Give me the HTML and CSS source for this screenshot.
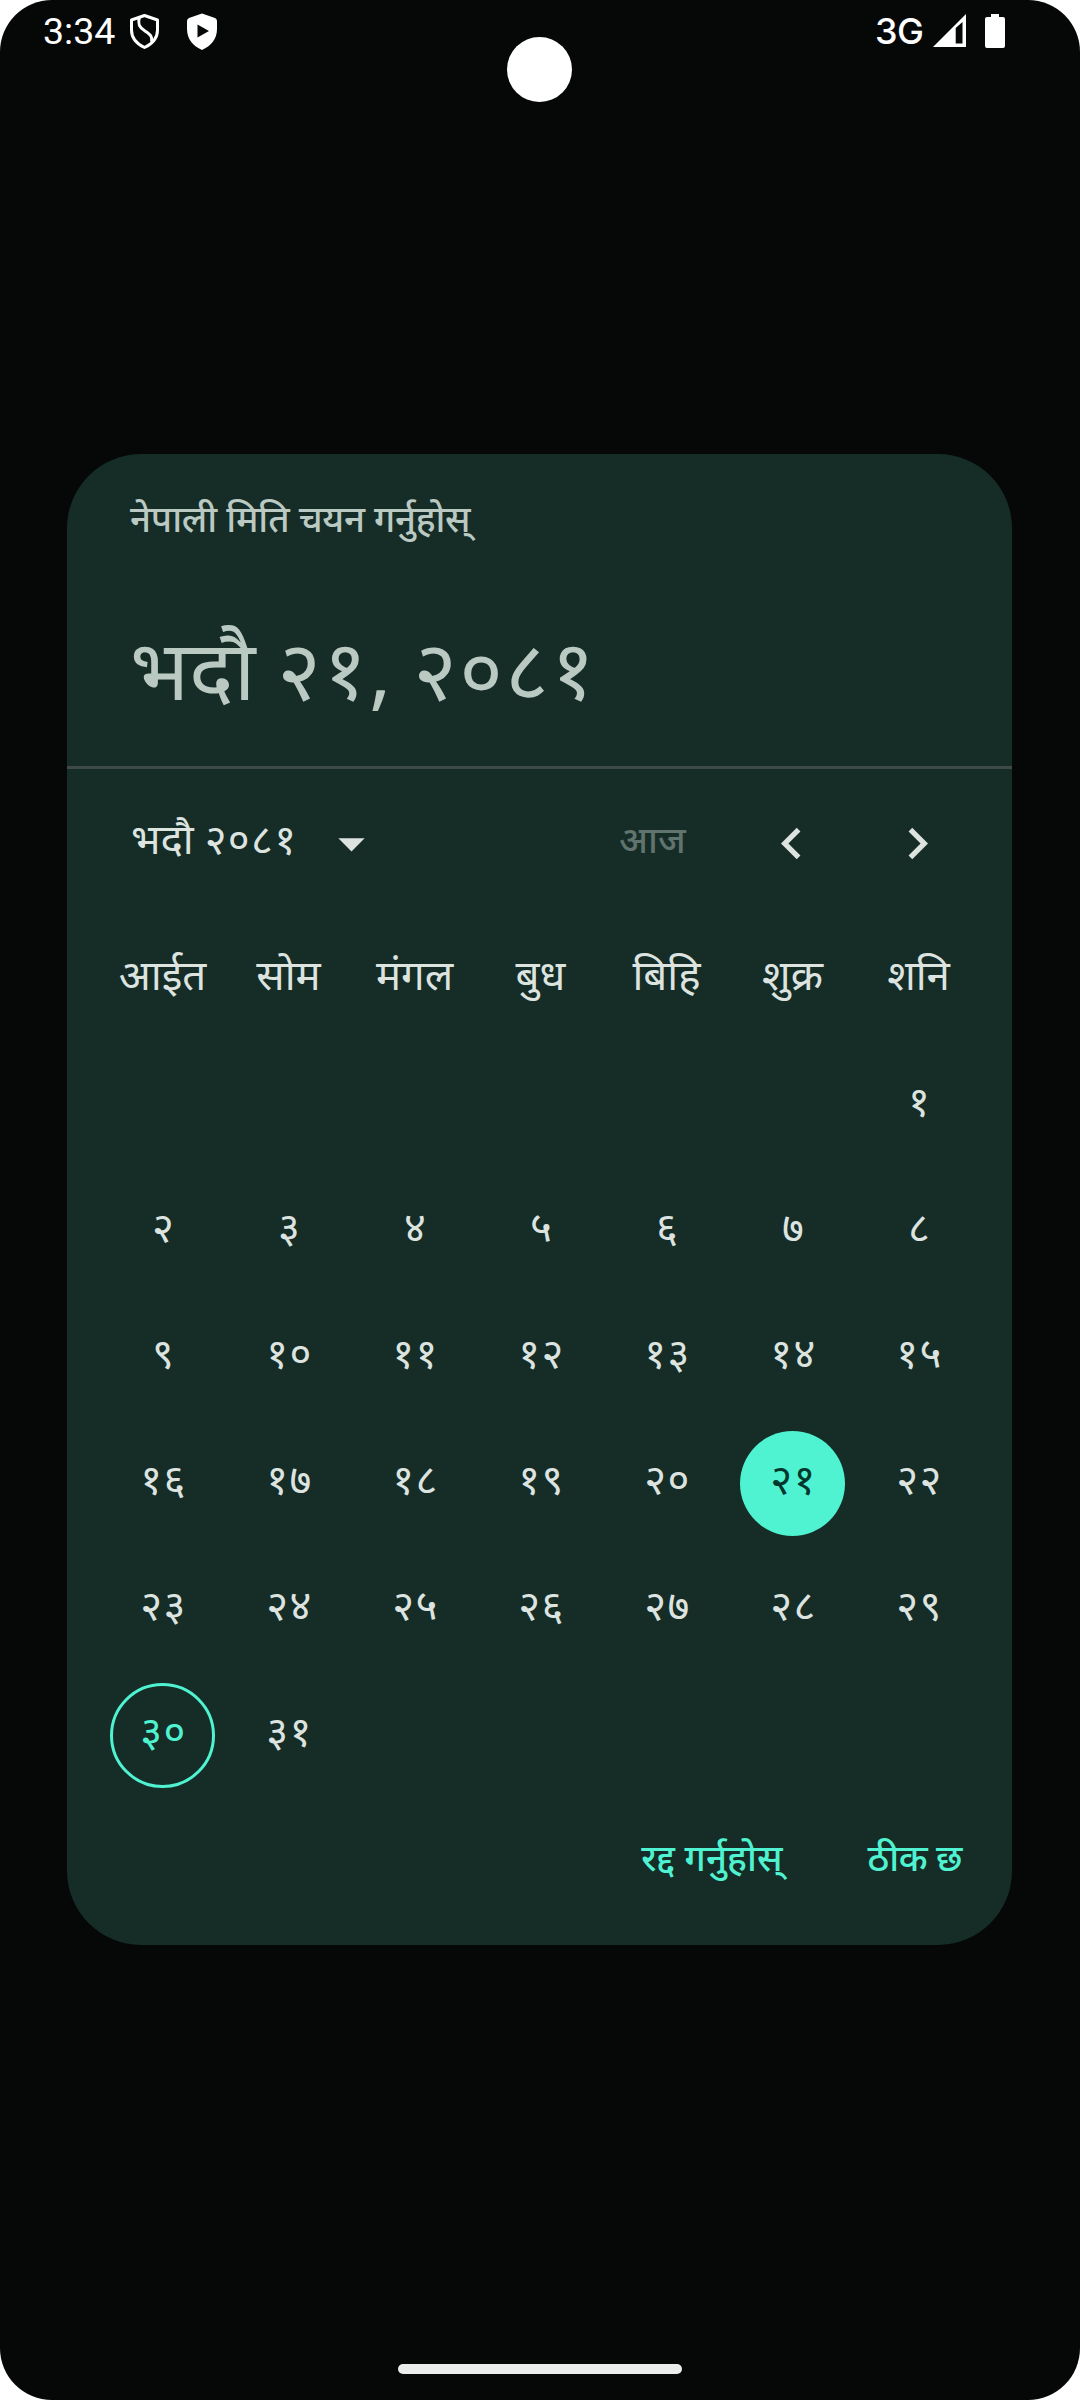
FILE: index.html
```html
<!DOCTYPE html>
<html lang="hi">
<head>
<meta charset="utf-8">
<title>नेपाली मिति चयन गर्नुहोस्</title>
<link rel="stylesheet" href="styles.css">
</head>
<body>
<div class="screen">
  <header class="status">
    <div class="status-left">
      <span class="clock">3:34</span>
      <svg class="shield" viewBox="0 0 30 37"><path d="M14.500 2.500 27.500 7V17C27.500 25 22 31 14.500 34.500 7 31 1.500 25 1.500 17V7Z M9.500 4.500C7.500 10 8.500 14 15 18 21 22 22.500 24 21.500 28.500" fill="none" stroke="#fff" stroke-width="3" stroke-linejoin="round"/></svg>
      <svg class="shield" viewBox="0 0 30 37"><path fill="#fff" fill-rule="evenodd" d="M15 0.500 28 5Q30 6 30 8V16C30 26 24 33 15 37 6 33 0 26 0 16V8Q0 6 2 5ZM10.500 11.500V24.500L22 18Z"/></svg>
    </div>
    <div class="status-right">
      <span class="network">3G</span>
      <svg class="signal" viewBox="0 0 33 33"><path fill="#fff" fill-rule="evenodd" d="M33 0V33H0ZM29.500 8 22.700 14V29.500H29.500Z"/></svg>
      <svg class="battery" viewBox="0 0 20 34"><path fill="#fff" d="M6 0H14V3H18Q20 3 20 5V32Q20 34 18 34H2Q0 34 0 32V5Q0 3 2 3H6Z"/></svg>
    </div>
  </header>
  <div class="camera"></div>
  <main class="dialog">
    <div class="heading">
      <p class="label">नेपाली मिति चयन गर्नुहोस्</p>
      <h1 class="date">भदौ <span class="digits">२१</span>, <span class="digits">२०८१</span></h1>
    </div>
    <div class="toolbar">
      <button class="month"><span class="month-name">भदौ <span class="digits">२०८१</span></span><svg class="icon" viewBox="0 0 24 24"><path d="M7 10l5 5 5-5z"/></svg></button>
      <button class="today" disabled>आज</button>
      <button class="nav"><svg class="icon" viewBox="0 0 24 24"><path d="M15.410 7.410 14 6l-6 6 6 6 1.410-1.410L10.830 12z"/></svg></button>
      <button class="nav"><svg class="icon" viewBox="0 0 24 24"><path d="M10 6 8.590 7.410 13.170 12l-4.580 4.590L10 18l6-6z"/></svg></button>
    </div>
    <div class="grid weekdays">
      <span>आईत</span><span>सोम</span><span>मंगल</span><span>बुध</span><span>बिहि</span><span>शुक्र</span><span>शनि</span>
    </div>
    <div class="grid digits">
      <span class="first">१</span>
      <span>२</span><span>३</span><span>४</span><span>५</span><span>६</span><span>७</span><span>८</span>
      <span>९</span><span>१०</span><span>११</span><span>१२</span><span>१३</span><span>१४</span><span>१५</span>
      <span>१६</span><span>१७</span><span>१८</span><span>१९</span><span>२०</span><span class="selected">२१</span><span>२२</span>
      <span>२३</span><span>२४</span><span>२५</span><span>२६</span><span>२७</span><span>२८</span><span>२९</span>
      <span class="current">३०</span><span>३१</span>
    </div>
    <div class="actions"><button class="cancel">रद्द गर्नुहोस्</button><button class="confirm">ठीक छ</button></div>
  </main>
  <div class="home"></div>
</div>
</body>
</html>
```
FILE: styles.css
```css
* { box-sizing: border-box; margin: 0; }
body { background: #fff; }
button { background: none; border: 0; padding: 0; color: inherit; font: inherit; }
svg { display: block; }
.screen {
  position: relative;
  display: flex;
  flex-direction: column;
  width: 1080px;
  height: 2400px;
  border-radius: 52px;
  background: #050807;
  color: #dde4e0;
  font: 42px "Noto Sans", sans-serif;
  overflow: hidden;
}
.status {
  display: flex;
  justify-content: space-between;
  height: 454px;
  padding: 13px 75px 0 43px;
  color: #fff;
  font: 37.500px/37px Roboto, sans-serif;
}
.status-left, .status-right { display: flex; align-items: flex-start; }
.clock { width: 87px; }
.shield { width: 30px; height: 37px; margin-right: 27px; }
.network { width: 58px; font: 500 36px/36px Inter, sans-serif; letter-spacing: -0.500px; }
.signal { width: 33px; height: 33px; margin: 1px 19px 0 0; }
.battery { width: 20px; height: 34px; margin-top: 1px; }
.camera { position: absolute; left: 507px; top: 37px; width: 65px; height: 65px; border-radius: 50%; background: #fff; }
.dialog {
  display: flex;
  flex-direction: column;
  width: 945px;
  height: 1491px;
  margin-left: 67px;
  border-radius: 74px;
  background: #152c27;
}
.digits { letter-spacing: 0.032em; }
.heading { height: 315px; padding: 38px 63px 0; border-bottom: 3px solid #3f4945; color: #bac9c2; }
.label { font-size: 36.750px; line-height: 52px; font-weight: 500; letter-spacing: -0.300px; }
.date { margin-top: 71px; font-size: 84px; line-height: 105px; font-weight: 400; }
.date .digits { letter-spacing: 0.026em; }
.toolbar { display: flex; align-items: center; height: 147px; padding: 2px 32px 0 63px; }
.month { display: flex; align-items: center; margin-right: auto; line-height: 52px; }
.month-name { width: 190px; padding: 0 0 12px 1px; text-align: left; }
.icon { width: 63px; height: 63px; fill: #dde4e0; }
.today { width: 140px; padding-bottom: 10px; font-size: 36.750px; font-weight: 500; line-height: 52px; text-align: left; color: #60736c; }
.nav { display: grid; place-items: center; width: 126px; height: 126px; }
.today + .nav { margin-left: -31px; }
.grid { display: grid; grid-template-columns: repeat(7, 126px); grid-auto-rows: 126px; padding-left: 32px; place-items: center; }
.grid span { display: flex; align-items: center; justify-content: center; width: 105px; height: 105px; padding: 0 0 10px 1px; border-radius: 50%; line-height: 52px; }
.digits.grid span { padding-left: 3px; }
.grid .first { grid-column: 7; }
.grid .selected { background: #4ff3d1; color: #00382e; }
.grid .current { border: 3px solid #4ff3d1; color: #4ff3d1; }
.actions { display: flex; justify-content: flex-end; gap: 85px; padding: 33px 50px 0 0; color: #4ff3d1; font-size: 36.750px; font-weight: 500; line-height: 52px; }
.cancel { letter-spacing: 0.100px; }
.confirm { letter-spacing: -0.500px; }
.home { width: 284px; height: 10px; margin: 419px auto 0; border-radius: 5px; background: #ebedec; }
```
